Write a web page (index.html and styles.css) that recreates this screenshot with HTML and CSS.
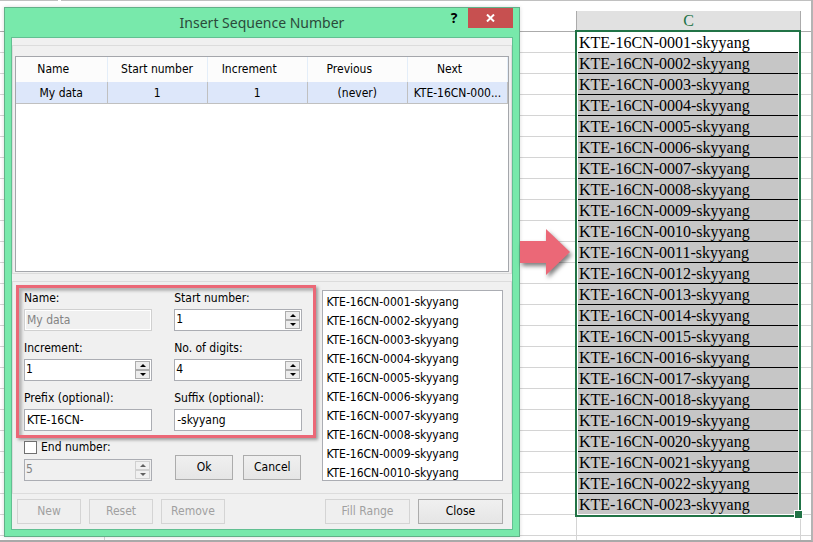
FILE: index.html
```
<!DOCTYPE html>
<html lang="en">
<head>
<meta charset="utf-8">
<title>Insert Sequence Number</title>
<link rel="stylesheet" href="styles.css">
</head>
<body>
<main class="sheet">
  <section class="dialog" role="dialog" aria-labelledby="dialog-title">
    <header class="titlebar">
      <h1 id="dialog-title">Insert Sequence Number</h1>
      <div class="window-buttons">
        <button class="help" type="button">?</button>
        <button class="close-x" type="button" aria-label="Close window">
          <svg width="9" height="8" viewBox="0 0 9 8"><path d="M1 0.5 8 7.5M8 0.5 1 7.5" stroke="#fff" stroke-width="2" fill="none"/></svg>
        </button>
      </div>
    </header>
    <form class="client">
      <div class="group group-list">
        <div class="grid-box">
          <table class="rules">
            <thead>
              <tr><th class="first">Name</th><th class="wide">Start number</th><th>Increment</th><th>Previous</th><th>Next</th></tr>
            </thead>
            <tbody>
              <tr><td>My data</td><td>1</td><td>1</td><td>(never)</td><td>KTE-16CN-000...</td></tr>
            </tbody>
          </table>
        </div>
      </div>
      <div class="group group-edit">
        <div class="settings">
          <div class="fields highlight">
            <div class="field">
              <label for="name">Name:</label>
              <input class="box" id="name" type="text" value="My data" disabled>
            </div>
            <div class="field">
              <label for="start">Start number:</label>
              <div class="box spin">
                <input id="start" type="text" inputmode="numeric" value="1">
                <span class="arrows"><button type="button" aria-label="Increase start number"><svg width="6" height="3" viewBox="0 0 6 3"><path d="M0 3 3 0 6 3z"/></svg></button><button type="button" aria-label="Decrease start number"><svg width="6" height="3" viewBox="0 0 6 3"><path d="M0 0 3 3 6 0z"/></svg></button></span>
              </div>
            </div>
            <div class="field">
              <label for="increment">Increment:</label>
              <div class="box spin">
                <input id="increment" type="text" inputmode="numeric" value="1">
                <span class="arrows"><button type="button" aria-label="Increase increment"><svg width="6" height="3" viewBox="0 0 6 3"><path d="M0 3 3 0 6 3z"/></svg></button><button type="button" aria-label="Decrease increment"><svg width="6" height="3" viewBox="0 0 6 3"><path d="M0 0 3 3 6 0z"/></svg></button></span>
              </div>
            </div>
            <div class="field">
              <label for="digits">No. of digits:</label>
              <div class="box spin">
                <input id="digits" type="text" inputmode="numeric" value="4">
                <span class="arrows"><button type="button" aria-label="Increase digits"><svg width="6" height="3" viewBox="0 0 6 3"><path d="M0 3 3 0 6 3z"/></svg></button><button type="button" aria-label="Decrease digits"><svg width="6" height="3" viewBox="0 0 6 3"><path d="M0 0 3 3 6 0z"/></svg></button></span>
              </div>
            </div>
            <div class="field">
              <label for="prefix">Prefix (optional):</label>
              <input class="box" id="prefix" type="text" value="KTE-16CN-">
            </div>
            <div class="field">
              <label for="suffix">Suffix (optional):</label>
              <input class="box" id="suffix" type="text" value="-skyyang">
            </div>
          </div>
          <div class="fields ending">
            <div class="field">
              <div class="check"><input id="use-end" type="checkbox"><label for="use-end">End number:</label></div>
              <div class="box spin off">
                <input type="text" inputmode="numeric" value="5" aria-label="End number" disabled>
                <span class="arrows"><button type="button" aria-label="Increase end number" disabled><svg width="6" height="3" viewBox="0 0 6 3"><path d="M0 3 3 0 6 3z"/></svg></button><button type="button" aria-label="Decrease end number" disabled><svg width="6" height="3" viewBox="0 0 6 3"><path d="M0 0 3 3 6 0z"/></svg></button></span>
              </div>
            </div>
            <div class="confirm">
              <button class="btn" type="button">Ok</button>
              <button class="btn" type="button">Cancel</button>
            </div>
          </div>
        </div>
        <ul class="preview">
          <li>KTE-16CN-0001-skyyang</li>
          <li>KTE-16CN-0002-skyyang</li>
          <li>KTE-16CN-0003-skyyang</li>
          <li>KTE-16CN-0004-skyyang</li>
          <li>KTE-16CN-0005-skyyang</li>
          <li>KTE-16CN-0006-skyyang</li>
          <li>KTE-16CN-0007-skyyang</li>
          <li>KTE-16CN-0008-skyyang</li>
          <li>KTE-16CN-0009-skyyang</li>
          <li>KTE-16CN-0010-skyyang</li>
        </ul>
      </div>
      <footer class="actions">
        <div class="small">
          <button class="btn" type="button" disabled>New</button>
          <button class="btn" type="button" disabled>Reset</button>
          <button class="btn" type="button" disabled>Remove</button>
        </div>
        <div class="large">
          <button class="btn" type="button" disabled>Fill Range</button>
          <button class="btn" type="button">Close</button>
        </div>
      </footer>
    </form>
  </section>

  <svg class="arrow" width="55" height="52" viewBox="0 0 55 52" aria-hidden="true"><path d="M0 12H26V0L50 23 26 46V34H0z" fill="#eb6877"/></svg>

  <section class="column">
    <table class="cells">
      <thead><tr><th>C</th></tr></thead>
      <tbody>
        <tr class="active"><td>KTE-16CN-0001-skyyang</td></tr>
        <tr><td>KTE-16CN-0002-skyyang</td></tr>
        <tr><td>KTE-16CN-0003-skyyang</td></tr>
        <tr><td>KTE-16CN-0004-skyyang</td></tr>
        <tr><td>KTE-16CN-0005-skyyang</td></tr>
        <tr><td>KTE-16CN-0006-skyyang</td></tr>
        <tr><td>KTE-16CN-0007-skyyang</td></tr>
        <tr><td>KTE-16CN-0008-skyyang</td></tr>
        <tr><td>KTE-16CN-0009-skyyang</td></tr>
        <tr><td>KTE-16CN-0010-skyyang</td></tr>
        <tr><td>KTE-16CN-0011-skyyang</td></tr>
        <tr><td>KTE-16CN-0012-skyyang</td></tr>
        <tr><td>KTE-16CN-0013-skyyang</td></tr>
        <tr><td>KTE-16CN-0014-skyyang</td></tr>
        <tr><td>KTE-16CN-0015-skyyang</td></tr>
        <tr><td>KTE-16CN-0016-skyyang</td></tr>
        <tr><td>KTE-16CN-0017-skyyang</td></tr>
        <tr><td>KTE-16CN-0018-skyyang</td></tr>
        <tr><td>KTE-16CN-0019-skyyang</td></tr>
        <tr><td>KTE-16CN-0020-skyyang</td></tr>
        <tr><td>KTE-16CN-0021-skyyang</td></tr>
        <tr><td>KTE-16CN-0022-skyyang</td></tr>
        <tr><td>KTE-16CN-0023-skyyang</td></tr>
      </tbody>
    </table>
  </section>
</main>
</body>
</html>
```
FILE: styles.css
```
* { box-sizing: border-box; }

body {
  margin: 0;
  background: #fff;
  font: 12px/16px "DejaVu Sans Condensed", "DejaVu Sans", sans-serif;
  font-stretch: condensed;
  color: #000;
}

button, input { font: inherit; color: inherit; }

/* Worksheet with its gridlines */
.sheet {
  display: grid;
  grid-template-columns: minmax(0, 516fr) 55px minmax(0, 226fr);
  min-height: 100vh;
  padding: 7px 10px 0 4px;
  border-right: 2px solid #b4b4b4;
  border-bottom: 2px solid #a9a9a9;
  background:
    linear-gradient(90deg, #c0c0c0 58px, #fff 58px 61px, #c0c0c0 61px) 0 0 / 100% 1px no-repeat,
    linear-gradient(#ababab, #ababab) 0 31px / 100% 1px no-repeat,
    linear-gradient(#d4d4d4, #d4d4d4) 104px 100% / 1px 5px no-repeat,
    repeating-linear-gradient(transparent 0 20px, #d4d4d4 20px 21px) 0 32px / 100% 100% no-repeat;
}

/* Dialog window */
.dialog {
  align-self: start;
  padding: 0 6px 6px;
  border: 1px solid #62b088;
  background: #78e9ab;
  box-shadow: 0 0 4px rgba(0, 0, 0, .15);
}

.titlebar {
  display: grid;
  height: 29px;
}

.titlebar h1 {
  grid-area: 1 / 1;
  margin: 0;
  font: 14px/30px "Noto Sans", sans-serif;
  color: #2b4a3a;
  text-align: center;
}

.window-buttons {
  grid-area: 1 / 1;
  display: flex;
  justify-content: flex-end;
  align-items: flex-start;
}

.window-buttons button { border: 0; padding: 0; height: 20px; }
.help { width: 28px; background: none; font: bold 14px/20px "Open Sans", sans-serif; }
.close-x { width: 45px; background: #c75050; display: grid; place-items: center; }

.client {
  border: 1px solid #62c092;
  background: #f0f0f0;
  padding: 7px 0 5px;
}

.group { border: 1px solid #dcdcdc; }
.group-list { padding: 10px 2px 1px; }

.grid-box {
  height: 216px;
  border: 1px solid #a4a6ab;
  background: #fff;
}

.rules {
  width: 100%;
  table-layout: fixed;
  border-collapse: separate;
  border-spacing: 0;
}

.rules th {
  height: 25px;
  padding: 0 16px 1px 0;
  border-right: 1px solid #e4eef9;
  background: #fcfcfc;
  font-weight: normal;
  white-space: nowrap;
}

.rules .first { width: 18.6%; }
.rules .wide { padding-right: 0; }

.rules td {
  height: 22px;
  padding: 0;
  border-right: 1px solid #c0c0c0;
  border-bottom: 1px solid #c0c0c0;
  background: #dde7fa;
  text-align: center;
  white-space: nowrap;
}

.group-edit {
  display: grid;
  grid-template-columns: minmax(0, 301fr) minmax(0, 181fr);
  gap: 6px;
  align-items: start;
  margin-top: 7px;
  padding: 3px 8px 12px 3px;
}

.fields {
  display: grid;
  grid-template-columns: repeat(2, minmax(0, 1fr));
  column-gap: 22px;
}

.highlight {
  row-gap: 9px;
  padding: 2px 11px 4px 5px;
  border: 3px solid #eb6877;
  box-shadow: 2px 2px 3px rgba(0, 0, 0, .35), inset 3px 3px 3px rgba(0, 0, 0, .25);
}

.field {
  display: grid;
  grid-template-columns: minmax(0, 1fr);
  row-gap: 3px;
}

.box {
  width: 100%;
  height: 22px;
  padding: 0 2px;
  border: 1px solid #abadb3;
  background: #fff;
}

input.box:disabled {
  border-color: #d0d0d0;
  background: #f0f0f0;
  color: #838383;
  box-shadow: inset 0 0 0 1px #fff;
}

.spin {
  display: flex;
  padding: 1px;
}

.spin input {
  flex: 1;
  min-width: 0;
  padding: 0 0 2px;
  border: 0;
  background: transparent;
}

.arrows {
  display: grid;
  width: 15px;
}

.arrows button {
  display: grid;
  place-items: center;
  padding: 0;
  border: 1px solid #acacac;
  background: #ececec;
  line-height: 0;
}

.off { background: #f0f0f0; color: #838383; }
.off .arrows button { border-color: #d0d0d0; background: #f0f0f0; }
.off path { fill: #606060; }

.ending { padding: 0 14px 0 8px; }
.check { display: flex; gap: 4px; align-items: center; height: 18px; }

.check input {
  appearance: none;
  width: 13px;
  height: 13px;
  margin: 0;
  border: 1px solid #707070;
  background: #fff;
}

.confirm {
  display: grid;
  grid-template-columns: 1fr 1fr;
  gap: 10px;
  align-self: end;
  margin: 0 1px 1px;
}

.btn {
  height: 25px;
  padding: 0 0 2px;
  border: 1px solid #acacac;
  background: linear-gradient(#f0f0f0, #e5e5e5);
}

.btn:disabled {
  border-color: #d4d4d4;
  background: #efefef;
  color: #a0a0a0;
}

.preview {
  margin: 5px 0 0;
  padding: 2px 3px 0;
  height: 191px;
  border: 1px solid #abadb3;
  background: #fff;
  list-style: none;
  line-height: 19px;
  white-space: nowrap;
  overflow: hidden;
}

.actions {
  display: flex;
  justify-content: space-between;
  padding: 5px 9px 0 5px;
}

.small, .large { display: flex; gap: 8px; }
.small .btn { width: 64px; }
.large .btn { width: 85px; }

.arrow {
  margin-top: 222px;
  filter: drop-shadow(2px 3px 2px rgba(0, 0, 0, .5));
}

/* Column C and its selected range */
.column {
  padding-top: 4px;
  background:
    linear-gradient(#d4d4d4, #d4d4d4) 1px 100% / 1px 28px no-repeat,
    linear-gradient(#d4d4d4, #d4d4d4) 100% 100% / 1px 28px no-repeat;
}

.cells {
  width: 100%;
  border-spacing: 0;
  border-collapse: separate;
  font: 16px/20px "Liberation Serif", serif;
}

.cells thead, .cells tbody { display: block; }
.cells tr, .cells th, .cells td { display: block; }

.cells th {
  height: 19px;
  margin-left: 1px;
  padding: 0;
  border-left: 1px solid #ababab;
  border-right: 1px solid #ababab;
  background: #e1e1e1;
  color: #217346;
  font-weight: normal;
  text-align: center;
}

.cells tbody {
  position: relative;
  padding: 0 1px;
  border: 2px solid #217346;
  background: #fff;
}

/* Fill handle */
.cells tbody::after {
  content: "";
  position: absolute;
  right: -4px;
  bottom: -4px;
  width: 7px;
  height: 7px;
  border: 1px solid #fff;
  background: #217346;
}

.cells td {
  height: 21px;
  padding: 1px 1px 0;
  border-bottom: 1px solid #000;
  background: #c6c6c6;
}

.cells .active td { background: #fff; }
.cells tr:last-child td { border-bottom-color: #fff; }
```
